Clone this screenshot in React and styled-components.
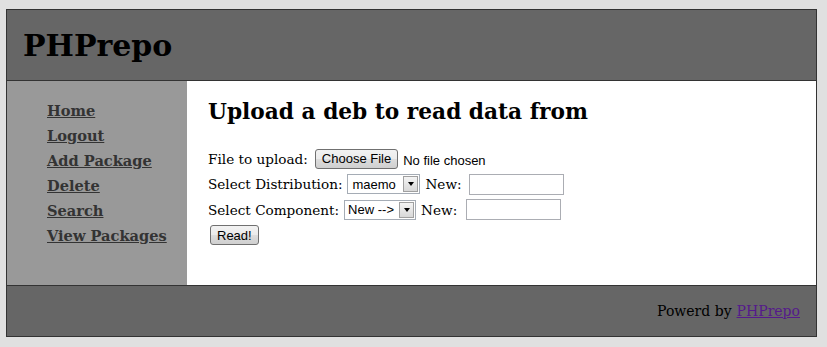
import React from "react";
import styled, { createGlobalStyle } from "styled-components";

const Global = createGlobalStyle`
  html, body { margin: 0; padding: 0; background: #e0e0e0; }
  body { font-family: "DejaVu Serif", Georgia, serif; }
`;

const Page = styled.div`
  padding: 9px 0 0 6px;
`;

const Frame = styled.div`
  width: 809px;
  border: 1px solid #333;
  background: #666;
`;

const Header = styled.header`
  height: 70px;
  border-bottom: 1px solid #333;
  display: flex;
  align-items: center;
  padding-left: 16px;
`;

const Title = styled.h1`
  margin: 0;
  font-size: 30px;
  font-weight: bold;
  color: #000;
`;

const Middle = styled.div`
  display: flex;
  height: 204px;
  border-bottom: 1px solid #333;
`;

const Sidebar = styled.nav`
  width: 180px;
  background: #999;
  padding: 17px 0 0 40px;
  box-sizing: border-box;
  display: flex;
  flex-direction: column;
`;

const NavLink = styled.a`
  color: #333;
  font-weight: bold;
  font-size: 14.6px;
  line-height: 25px;
  text-decoration: underline;
`;

const Content = styled.main`
  flex: 1;
  background: #fff;
  padding: 16px 0 0 21px;
`;

const Heading = styled.h2`
  margin: 0 0 19px;
  font-size: 21.7px;
  line-height: 30px;
  font-weight: bold;
  color: #000;
`;

const Row = styled.div`
  display: flex;
  align-items: center;
  height: 25.5px;
  font-size: 13.6px;
  color: #000;
  gap: 5px;
`;

const Btn = styled.span`
  display: inline-flex;
  align-items: center;
  justify-content: center;
  box-sizing: border-box;
  height: 20px;
  padding: 0 6px;
  font-family: Arial, "Liberation Sans", sans-serif;
  font-size: 13px;
  color: #000;
  border: 1px solid #707070;
  border-radius: 3px;
  background: linear-gradient(#f2f2f2 0%, #ebebeb 50%, #dddddd 51%, #cfcfcf 100%);
  margin-left: ${(p) => p.ml || 0}px;
`;

const Hint = styled.span`
  font-family: Arial, "Liberation Sans", sans-serif;
  font-size: 13px;
  padding-top: 4px;
`;

const Select = styled.span`
  display: inline-flex;
  align-items: stretch;
  box-sizing: border-box;
  width: ${(p) => p.w}px;
  height: 20px;
  border: 1px solid #a5acb5;
  background: #fff;
  font-family: Arial, "Liberation Sans", sans-serif;
  font-size: 13px;
`;

const SelectText = styled.span`
  flex: 1;
  display: flex;
  align-items: center;
  padding-left: ${(p) => p.pl || 4}px;
`;

const Arrow = styled.span`
  width: 15px;
  margin: 1px;
  box-sizing: border-box;
  border: 1px solid #a0a0a0;
  background: linear-gradient(#f4f4f4, #d8d8d8);
  display: flex;
  align-items: center;
  justify-content: center;
  &::after {
    content: "";
    border-left: 3px solid transparent;
    border-right: 3px solid transparent;
    border-top: 4px solid #000;
  }
`;

const TextInput = styled.span`
  display: inline-block;
  box-sizing: border-box;
  width: 95px;
  height: 21px;
  margin-left: ${(p) => p.ml || 2}px;
  border: 1px solid #abadb3;
  background: #fff;
`;

const Footer = styled.footer`
  height: 50px;
  display: flex;
  align-items: center;
  justify-content: flex-end;
  padding-right: 16px;
  font-size: 14px;
  color: #000;
`;

const FootLink = styled.a`
  color: #551a8b;
  text-decoration: underline;
  margin-left: 5px;
`;

export default function App() {
  const links = ["Home", "Logout", "Add Package", "Delete", "Search", "View Packages"];
  return (
    <>
      <Global />
      <Page>
        <Frame>
          <Header>
            <Title>PHPrepo</Title>
          </Header>
          <Middle>
            <Sidebar>
              {links.map((l) => (
                <NavLink key={l} href="#">{l}</NavLink>
              ))}
            </Sidebar>
            <Content>
              <Heading>Upload a deb to read data from</Heading>
              <Row>
                File to upload:
                <Btn ml={2}>Choose File</Btn>
                <Hint>No file chosen</Hint>
              </Row>
              <Row>
                Select Distribution:
                <Select w={73}>
                  <SelectText>maemo</SelectText>
                  <Arrow />
                </Select>
                New:
                <TextInput ml={2} />
              </Row>
              <Row>
                Select Component:
                <Select w={72}>
                  <SelectText pl={3}>New --&gt;</SelectText>
                  <Arrow />
                </Select>
                New:
                <TextInput ml={4} />
              </Row>
              <Row>
                <Btn ml={2}>Read!</Btn>
              </Row>
            </Content>
          </Middle>
          <Footer>
            Powerd by<FootLink href="#">PHPrepo</FootLink>
          </Footer>
        </Frame>
      </Page>
    </>
  );
}
